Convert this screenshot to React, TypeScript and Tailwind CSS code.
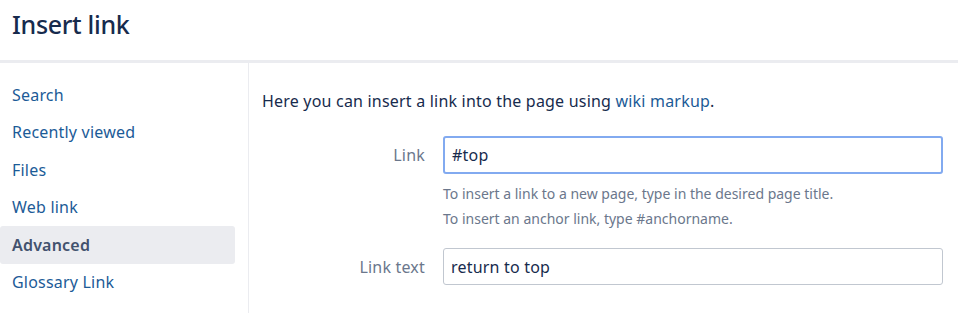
import React from 'react';

const navItems = ['Search', 'Recently viewed', 'Files', 'Web link', 'Advanced', 'Glossary Link'];

const App: React.FC = () => {
  const active = 'Advanced';

  return (
    <div className="w-[958px] h-[313px] overflow-hidden bg-white font-['Segoe_UI','Noto_Sans',sans-serif] text-[#172b4d] tracking-[0.2px]">
      <header className="h-[63px] pt-[10px] px-3 border-b-[3px] border-[#ebecf0]">
        <h1 className="text-[25px] font-medium leading-[28px] tracking-[-0.3px]">Insert link</h1>
      </header>

      <div className="flex">
        <nav className="w-[249px] h-[250px] border-r border-[#ebecf0] pt-[13px] pr-[13px]">
          {navItems.map((item) => (
            <div
              key={item}
              className={`h-[37.5px] flex items-center px-3 rounded-[3px] text-[16px] ${
                item === active ? 'bg-[#ebecf0] text-[#42526e] font-semibold' : 'text-[#1c5b97]'
              }`}
            >
              {item}
            </div>
          ))}
        </nav>

        <main className="flex-1 pl-[13px] pr-[15px] pt-[27px]">
          <p className="text-[16px] leading-[22px]">
            Here you can insert a link into the page using <span className="text-[#1c5b97]">wiki markup</span>.
          </p>

          <div className="flex items-center mt-[24px]">
            <label className="w-[163px] text-right text-[16px] text-[#6b778c]">Link</label>
            <div className="ml-[18px] flex-1 h-[38px] border-2 border-[#82aaf0] rounded-[3px] flex items-center px-[7px] text-[16px]">
              #top
            </div>
          </div>
          <div className="ml-[181px] mt-[7px] text-[14px] leading-[25px] text-[#6b778c] tracking-normal">
            <p>To insert a link to a new page, type in the desired page title.</p>
            <p>To insert an anchor link, type #anchorname.</p>
          </div>

          <div className="flex items-center mt-[17px]">
            <label className="w-[163px] text-right text-[16px] text-[#6b778c]">Link text</label>
            <div className="ml-[18px] flex-1 h-[37px] border border-[#c1c7d0] rounded-[3px] flex items-center px-[7px] text-[16px]">
              return to top
            </div>
          </div>
        </main>
      </div>
    </div>
  );
};

export default App;
